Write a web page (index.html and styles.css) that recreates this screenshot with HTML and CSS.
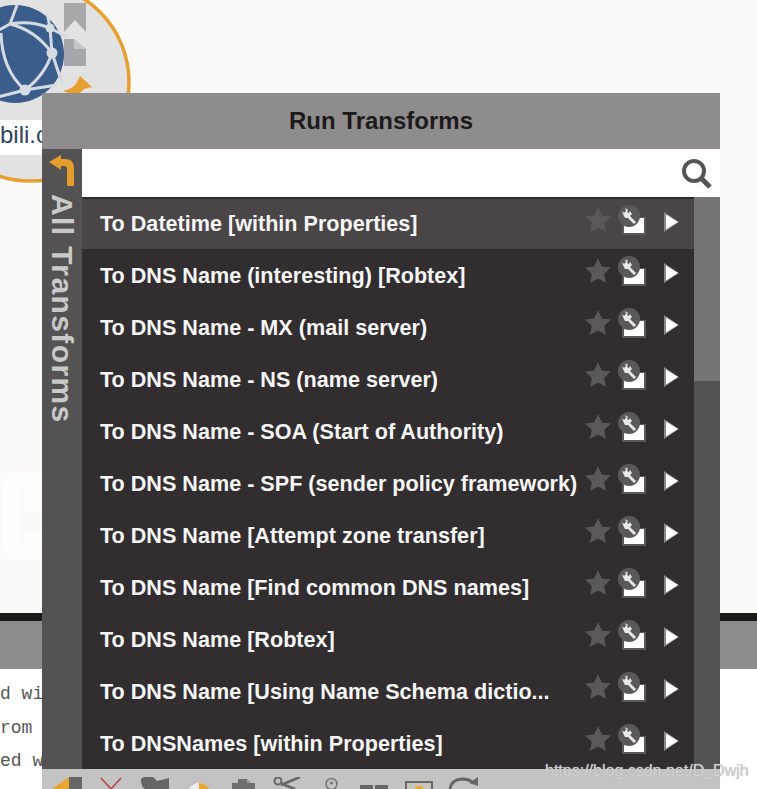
FILE: index.html
```html
<!DOCTYPE html>
<html lang="en">
<head>
<meta charset="utf-8">
<title>Run Transforms</title>
<link rel="stylesheet" href="styles.css">
</head>
<body>
<div class="canvas">
  <div class="node">
    <svg class="node-svg" width="135" height="185" viewBox="0 0 135 185">
      <filter id="soft"><feGaussianBlur stdDeviation="0.7"/></filter>
      <circle cx="30" cy="82" r="99" fill="#e2e2e2" stroke="#e6a030" stroke-width="3.5"/>
      <circle cx="15" cy="54" r="49" fill="#3b5d8c" filter="url(#soft)"/>
      <g filter="url(#soft)">
        <g fill="none" stroke="#d5dbe3" stroke-width="3">
          <path d="M10 24Q30 20 50 28M10 24Q35 30 52 53M1 33Q2 70 25 90M50 28L52 53M52 53Q45 75 25 90M52 53L62 83M25 90L57 85M25 90L-2 97M50 28L67 37M50 28L47 12M10 24L17 5M-1 30L10 24"/>
        </g>
        <circle cx="50" cy="28" r="4.5" fill="#d5dbe3"/>
        <circle cx="52" cy="53" r="5.5" fill="#d5dbe3"/>
        <circle cx="25" cy="90" r="5.5" fill="#d5dbe3"/>
      </g>
      <path d="M64 3H86V32L75 20L64 32Z" fill="#a9a9a9"/>
      <path d="M64 39H74L86 49V66H64Z" fill="#8f9398" opacity=".75"/>
      <path d="M74 39L86 49H74Z" fill="#c6c6c6"/>
      <path d="M63 91Q72 89 76 84L80 76L92 87L84 89Q80 94 74 95Z" fill="#e6a030"/>
    </svg>
    <div class="node-label">bili.com</div>
  </div>
  <svg class="ghost-letter" width="42" height="90" viewBox="0 0 42 90">
    <path fill-rule="evenodd" d="M2 20Q2 2 20 2H42V42H25V17H20V74H25V63H42V90H20Q2 90 2 72Z" fill="#fefefd"/>
  </svg>
  <div class="detail-bar"></div>
  <pre class="log">d with
rom t
ed wit</pre>
</div>

<section class="panel">
  <h1 class="panel-title">Run Transforms</h1>
  <div class="panel-body">
    <aside class="side">
      <svg class="back-icon" width="26" height="32" viewBox="0 0 26 32">
        <path d="M0 7L12 0V4H17Q25 4 25 14V31H18V14Q18 11 15 11H12V15Z" fill="#e49c2d"/>
      </svg>
      <span class="side-label">All Transforms</span>
    </aside>
    <div class="main">
      <div class="search">
        <svg class="search-icon" width="32" height="32" viewBox="0 0 32 32">
          <circle cx="13" cy="13" r="10" fill="none" stroke="#555" stroke-width="4"/>
          <path d="M20 20L29 29" stroke="#555" stroke-width="5"/>
        </svg>
      </div>
      <div class="list-wrap">
        <ul class="list">
          <li class="row row-active"><span class="row-name">To Datetime [within Properties]</span><span class="acts"><svg class="star" viewBox="0 0 26 26"><use href="#star"/></svg><svg class="machine" viewBox="0 0 28 30"><use href="#machine"/></svg><svg class="play" viewBox="0 0 15 20"><use href="#play"/></svg></span></li>
          <li class="row"><span class="row-name">To DNS Name (interesting) [Robtex]</span><span class="acts"><svg class="star" viewBox="0 0 26 26"><use href="#star"/></svg><svg class="machine" viewBox="0 0 28 30"><use href="#machine"/></svg><svg class="play" viewBox="0 0 15 20"><use href="#play"/></svg></span></li>
          <li class="row"><span class="row-name">To DNS Name - MX (mail server)</span><span class="acts"><svg class="star" viewBox="0 0 26 26"><use href="#star"/></svg><svg class="machine" viewBox="0 0 28 30"><use href="#machine"/></svg><svg class="play" viewBox="0 0 15 20"><use href="#play"/></svg></span></li>
          <li class="row"><span class="row-name">To DNS Name - NS (name server)</span><span class="acts"><svg class="star" viewBox="0 0 26 26"><use href="#star"/></svg><svg class="machine" viewBox="0 0 28 30"><use href="#machine"/></svg><svg class="play" viewBox="0 0 15 20"><use href="#play"/></svg></span></li>
          <li class="row"><span class="row-name">To DNS Name - SOA (Start of Authority)</span><span class="acts"><svg class="star" viewBox="0 0 26 26"><use href="#star"/></svg><svg class="machine" viewBox="0 0 28 30"><use href="#machine"/></svg><svg class="play" viewBox="0 0 15 20"><use href="#play"/></svg></span></li>
          <li class="row"><span class="row-name">To DNS Name - SPF (sender policy framework)</span><span class="acts"><svg class="star" viewBox="0 0 26 26"><use href="#star"/></svg><svg class="machine" viewBox="0 0 28 30"><use href="#machine"/></svg><svg class="play" viewBox="0 0 15 20"><use href="#play"/></svg></span></li>
          <li class="row"><span class="row-name">To DNS Name [Attempt zone transfer]</span><span class="acts"><svg class="star" viewBox="0 0 26 26"><use href="#star"/></svg><svg class="machine" viewBox="0 0 28 30"><use href="#machine"/></svg><svg class="play" viewBox="0 0 15 20"><use href="#play"/></svg></span></li>
          <li class="row"><span class="row-name">To DNS Name [Find common DNS names]</span><span class="acts"><svg class="star" viewBox="0 0 26 26"><use href="#star"/></svg><svg class="machine" viewBox="0 0 28 30"><use href="#machine"/></svg><svg class="play" viewBox="0 0 15 20"><use href="#play"/></svg></span></li>
          <li class="row"><span class="row-name">To DNS Name [Robtex]</span><span class="acts"><svg class="star" viewBox="0 0 26 26"><use href="#star"/></svg><svg class="machine" viewBox="0 0 28 30"><use href="#machine"/></svg><svg class="play" viewBox="0 0 15 20"><use href="#play"/></svg></span></li>
          <li class="row"><span class="row-name">To DNS Name [Using Name Schema dictio...</span><span class="acts"><svg class="star" viewBox="0 0 26 26"><use href="#star"/></svg><svg class="machine" viewBox="0 0 28 30"><use href="#machine"/></svg><svg class="play" viewBox="0 0 15 20"><use href="#play"/></svg></span></li>
          <li class="row"><span class="row-name">To DNSNames [within Properties]</span><span class="acts"><svg class="star" viewBox="0 0 26 26"><use href="#star"/></svg><svg class="machine" viewBox="0 0 28 30"><use href="#machine"/></svg><svg class="play" viewBox="0 0 15 20"><use href="#play"/></svg></span></li>
        </ul>
        <div class="scrollbar"><div class="thumb"></div></div>
      </div>
    </div>
  </div>
  <div class="toolbar">
    <div class="slot"><svg width="30" height="12" viewBox="0 0 30 12"><path d="M0 12L17 0V12Z" fill="#e9a62f"/><path d="M17 0H30V12H17Z" fill="#666"/></svg></div>
    <div class="slot"><svg width="22" height="12" viewBox="0 0 22 12"><path d="M1 1L11 12L21 1" fill="none" stroke="#b8444a" stroke-width="1.6"/></svg></div>
    <div class="slot"><svg width="28" height="12" viewBox="0 0 28 12"><path d="M0 3Q0 0 5 0H12L16 4L28 1V12H4Q0 10 0 3Z" fill="#666"/></svg></div>
    <div class="slot"><svg width="29" height="12" viewBox="0 0 29 12"><circle cx="14" cy="18" r="12" fill="#eee"/><path d="M14 6A12 12 0 0 1 26 18H14Z" fill="#e9a62f"/></svg></div>
    <div class="slot"><svg width="23" height="12" viewBox="0 0 23 12"><path d="M0 6H6V2H15V6H23V12H0Z" fill="#6e6e6e"/><path d="M15 2L20 6H15Z" fill="#999"/></svg></div>
    <div class="slot"><svg width="28" height="12" viewBox="0 0 28 12"><circle cx="5" cy="4" r="3.5" fill="none" stroke="#666" stroke-width="2"/><path d="M8 8L27 0M9 7L22 12" stroke="#666" stroke-width="2.6"/></svg></div>
    <div class="slot"><svg width="15" height="12" viewBox="0 0 15 12"><circle cx="7.5" cy="7" r="5.5" fill="none" stroke="#777" stroke-width="1.6"/><circle cx="7.5" cy="6" r="1.6" fill="#777"/></svg></div>
    <div class="slot"><svg width="30" height="12" viewBox="0 0 30 12"><path d="M0 8H13V12H0ZM15 8H28V12H15Z" fill="#666"/></svg></div>
    <div class="slot"><svg width="28" height="12" viewBox="0 0 28 12"><rect x="1" y="5" width="26" height="12" fill="#c8c4ba" stroke="#666" stroke-width="2"/><circle cx="14" cy="14" r="5" fill="#e9a62f"/></svg></div>
    <div class="slot"><svg width="32" height="12" viewBox="0 0 32 12"><path d="M3 12Q4 3 15 2Q22 2 25 5" fill="none" stroke="#666" stroke-width="3"/><path d="M31 0V9L22 6Z" fill="#666"/></svg></div>
  </div>
</section>

<div class="watermark">https://blog.csdn.net/D_Dwjh</div>

<svg class="defs" width="0" height="0">
  <defs>
    <path id="star" d="M13 0L16.8 8.6L26 9.6L19.2 15.8L21 25L13 20.4L5 25L6.8 15.8L0 9.6L9.2 8.6Z" fill="#5a5859"/>
    <g id="machine">
      <rect x="4" y="12" width="24" height="18" fill="#5a5859"/>
      <path d="M6 19H17L20 13H26V28H6Z" fill="#fff"/>
      <circle cx="11" cy="11" r="11" fill="#5a5859"/>
      <path d="M7 3L10 5L9 7L11 8L12 6L14 9L12 11L18 17L16 19L10 13L7 13L5 9L4 6L6 8L8 6Z" fill="#e8e8e8"/>
    </g>
    <g id="play">
      <path d="M0 0L15 10L0 20Z" fill="#8a8a8a"/>
      <path d="M2 2.5L14 10L2 17.5Z" fill="#fff"/>
    </g>
  </defs>
</svg>
```

FILE: styles.css
```css
* { box-sizing: border-box; }
html, body { margin: 0; padding: 0; height: 789px; overflow: hidden; }
body { position: relative; background: #fbfaf8; font-family: "Liberation Sans", Arial, sans-serif; }

.canvas { position: absolute; inset: 0; overflow: hidden; }
.node { position: absolute; left: 0; top: 0; width: 135px; height: 185px; }
.node-svg { position: absolute; left: 0; top: 0; }
.node-label {
  position: absolute; left: 0; top: 120px; width: 135px; height: 35px;
  background: #fff; color: #2f4560; font-size: 24px; line-height: 30px;
  white-space: nowrap; overflow: hidden;
}
.ghost-letter { position: absolute; left: 0; top: 470px; }
.detail-bar {
  position: absolute; left: 0; top: 613px; width: 757px; height: 56px;
  background: #8e8c8d; border-top: 8px solid #1d1a1b;
}
.log {
  position: absolute; left: 0; top: 669px; width: 757px; height: 120px; margin: 0;
  background: #fff; color: #555; font-family: "Liberation Mono", monospace;
  font-size: 18px; line-height: 33.5px; padding-top: 9px;
}

.panel { position: absolute; left: 42px; top: 93px; width: 678px; height: 696px; display: flex; flex-direction: column; overflow: hidden; }
.panel-title {
  margin: 0; height: 56px; flex: none; background: #8e8c8d; color: #1d1a1b;
  font-size: 24px; font-weight: 700; line-height: 56px; text-align: center;
}
.panel-body { display: flex; height: 620px; flex: none; }
.side { width: 40px; flex: none; background: #545253; display: flex; flex-direction: column; align-items: center; }
.back-icon { display: block; margin-top: 6px; flex: none; }
.side-label {
  writing-mode: vertical-rl; color: #c9c9c9; font-size: 30px; font-weight: 700; letter-spacing: 1.4px;
  line-height: 40px; margin-top: 7px; white-space: nowrap;
}
.main { flex: 1; display: flex; flex-direction: column; min-width: 0; }
.search { height: 48px; flex: none; background: #fff; display: flex; align-items: center; justify-content: flex-end; padding: 2px 7px 0 0; }
.search-icon { display: block; }
.list-wrap { display: flex; height: 572px; flex: none; }
.list { list-style: none; margin: 0; padding: 0; width: 612px; flex: none; background: #322e30; }
.row { height: 52px; display: flex; align-items: center; padding: 2px 0 0 18px; position: relative; }
.row-active { background: #4a4647; border-top: 2px solid #322e30; padding-top: 0; }
.row-name { color: #f6f6f6; font-size: 21.6px; font-weight: 700; white-space: nowrap; line-height: 50px; }
.acts { position: absolute; left: 503px; top: 7px; display: flex; align-items: flex-start; }
.row-active .acts { top: 6px; }
.star { width: 26px; height: 26px; margin-top: 2px; display: block; }
.machine { width: 28px; height: 30px; margin-left: 7px; display: block; }
.play { width: 15px; height: 20px; margin-left: 18px; margin-top: 7px; display: block; }
.scrollbar { width: 26px; flex: none; background: #545253; }
.thumb { height: 184px; background: #767374; }
.toolbar { height: 20px; flex: none; background: #c3c3c3; display: flex; padding: 8px 0 0 3px; align-items: flex-start; }
.slot { width: 44px; height: 12px; flex: none; display: flex; justify-content: center; }
.slot svg { display: block; flex: none; }

.watermark {
  position: absolute; left: 545px; top: 761px; color: #d2d2d2;
  font-family: "Liberation Sans", Arial, sans-serif; font-size: 16px; line-height: 20px; white-space: nowrap;
  text-shadow: 0 0 1px #aaa;
}
.defs { position: absolute; }
```
